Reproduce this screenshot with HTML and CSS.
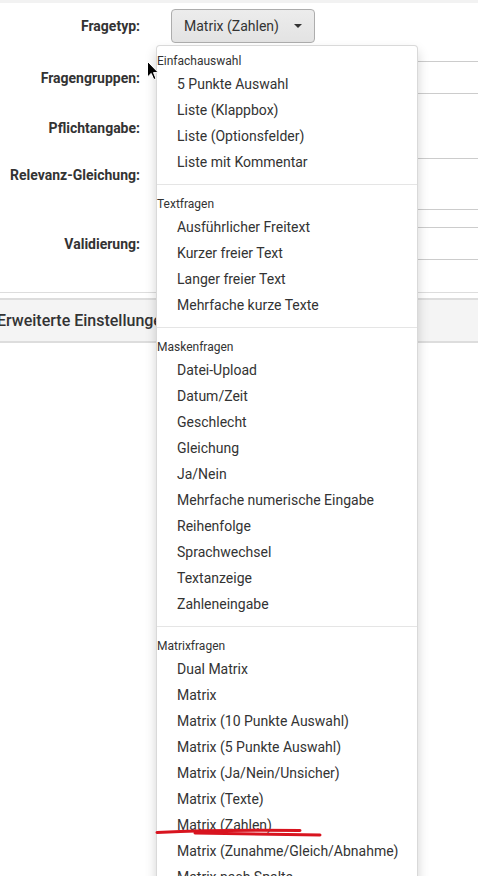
FILE: index.html
```html
<!DOCTYPE html>
<html lang="de">
<head>
    <meta charset="UTF-8">
    <meta name="viewport" content="width=device-width, initial-scale=1.0">
    <title>Frage bearbeiten</title>
    <link rel="stylesheet" href="styles.css">
</head>
<body>
    <div class="topband"></div>

    <form class="question-form">
        <div class="form-row row-type">
            <label class="row-label">Fragetyp:</label>
            <div class="row-control">
                <button type="button" class="type-btn">Matrix (Zahlen)<span class="caret"></span></button>
            </div>
        </div>
        <div class="form-row">
            <label class="row-label">Fragengruppen:</label>
            <div class="row-control"><div class="field"></div></div>
        </div>
        <div class="form-row row-mandatory">
            <label class="row-label">Pflichtangabe:</label>
            <div class="row-control"></div>
        </div>
        <div class="form-row">
            <label class="row-label">Relevanz-Gleichung:</label>
            <div class="row-control"><div class="field field-tall"></div></div>
        </div>
        <div class="form-row">
            <label class="row-label">Validierung:</label>
            <div class="row-control"><div class="field"></div></div>
        </div>
    </form>

    <hr class="divider">
    <div class="advanced-bar"><span>Erweiterte Einstellungen</span></div>

    <!-- open question type menu -->
    <ul class="type-menu">
        <li class="menu-header">Einfachauswahl</li>
        <li><a>5 Punkte Auswahl</a></li>
        <li><a>Liste (Klappbox)</a></li>
        <li><a>Liste (Optionsfelder)</a></li>
        <li><a>Liste mit Kommentar</a></li>
        <li class="menu-divider"></li>
        <li class="menu-header">Textfragen</li>
        <li><a>Ausführlicher Freitext</a></li>
        <li><a>Kurzer freier Text</a></li>
        <li><a>Langer freier Text</a></li>
        <li><a>Mehrfache kurze Texte</a></li>
        <li class="menu-divider"></li>
        <li class="menu-header">Maskenfragen</li>
        <li><a>Datei-Upload</a></li>
        <li><a>Datum/Zeit</a></li>
        <li><a>Geschlecht</a></li>
        <li><a>Gleichung</a></li>
        <li><a>Ja/Nein</a></li>
        <li><a>Mehrfache numerische Eingabe</a></li>
        <li><a>Reihenfolge</a></li>
        <li><a>Sprachwechsel</a></li>
        <li><a>Textanzeige</a></li>
        <li><a>Zahleneingabe</a></li>
        <li class="menu-divider"></li>
        <li class="menu-header">Matrixfragen</li>
        <li><a>Dual Matrix</a></li>
        <li><a>Matrix</a></li>
        <li><a>Matrix (10 Punkte Auswahl)</a></li>
        <li><a>Matrix (5 Punkte Auswahl)</a></li>
        <li><a>Matrix (Ja/Nein/Unsicher)</a></li>
        <li><a>Matrix (Texte)</a></li>
        <li><a>Matrix (Zahlen)</a></li>
        <li><a>Matrix (Zunahme/Gleich/Abnahme)</a></li>
        <li><a>Matrix nach Spalte</a></li>
    </ul>

    <!-- red marker stroke under the chosen entry -->
    <svg class="marker" width="180" height="20" viewBox="0 0 180 20">
        <path d="M7 10.5 Q 70 7.5 150 8.5" />
        <path d="M45 11 Q 110 12 170 13" />
    </svg>

    <!-- mouse pointer -->
    <svg class="pointer" width="12" height="20" viewBox="0 0 12 20">
        <path d="M0.5 0.5 L0.5 16 L4.2 12.4 L6.8 18.6 L9 17.6 L6.5 11.6 L11.3 11.6 Z" />
    </svg>
</body>
</html>
```

FILE: styles.css
```css
body {
    font-family: Roboto, "Liberation Sans", sans-serif;
    font-size: 14px;
    color: #333;
    background-color: #fff;
    margin: 0;
    padding: 0;
    overflow: hidden;
}

.topband {
    height: 3px;
    background-color: #f2f2f2;
}

.question-form {
    padding-top: 6px;
}

.form-row {
    display: grid;
    grid-template-columns: 140px 1fr;
    column-gap: 17px;
    align-items: start;
    margin-bottom: 17px;
}

.row-type {
    min-height: 35px;
}

.row-mandatory {
    min-height: 30px;
}

.row-label {
    font-weight: 700;
    text-align: right;
    padding-top: 7px;
    line-height: 20px;
    white-space: nowrap;
}

.row-control {
    min-width: 0;
}

.type-btn {
    margin-left: 14px;
    height: 34px;
    padding: 6px 12px;
    font-family: inherit;
    font-size: 14px;
    color: #333;
    background: linear-gradient(#ececec, #e3e3e3);
    border: 1px solid #adadad;
    border-radius: 4px;
    display: flex;
    align-items: center;
    gap: 15px;
}

.caret {
    width: 0;
    height: 0;
    border-top: 4px solid #333;
    border-left: 4px solid transparent;
    border-right: 4px solid transparent;
}

.field {
    height: 33px;
    box-sizing: border-box;
    border: 1px solid #ccc;
    margin-right: -10px;
}

.field-tall {
    height: 52px;
}

.divider {
    border: 0;
    border-top: 1px solid #ddd;
    margin: 32px 0 5px;
}

.advanced-bar {
    height: 45px;
    box-sizing: border-box;
    background-color: #f4f4f4;
    border-top: 2px solid #ddd;
    border-bottom: 2px solid #ddd;
    display: flex;
    align-items: center;
    font-size: 16px;
    font-weight: 500;
    white-space: nowrap;
}

.advanced-bar span {
    margin-left: -3px;
}

.type-menu {
    position: absolute;
    left: 156px;
    top: 45px;
    width: 262px;
    box-sizing: border-box;
    margin: 0;
    padding: 5px 0;
    list-style: none;
    background-color: #fff;
    border: 1px solid rgba(0, 0, 0, 0.15);
    border-radius: 4px;
    box-shadow: 0 6px 12px rgba(0, 0, 0, 0.175);
}

.menu-header {
    font-size: 12px;
    line-height: 14px;
    padding: 3px 0;
    color: #333;
}

.type-menu a {
    display: block;
    padding: 3px 20px;
    line-height: 20px;
    color: #333;
    white-space: nowrap;
}

.menu-divider {
    height: 1px;
    margin: 9px 0;
    background-color: #e5e5e5;
}

.marker {
    position: absolute;
    left: 150px;
    top: 822px;
}

.marker path {
    fill: none;
    stroke: #d8141f;
    stroke-width: 3;
    stroke-linecap: round;
}

.pointer {
    position: absolute;
    left: 147px;
    top: 61px;
}

.pointer path {
    fill: #000;
    stroke: #fff;
    stroke-width: 1;
}
```
